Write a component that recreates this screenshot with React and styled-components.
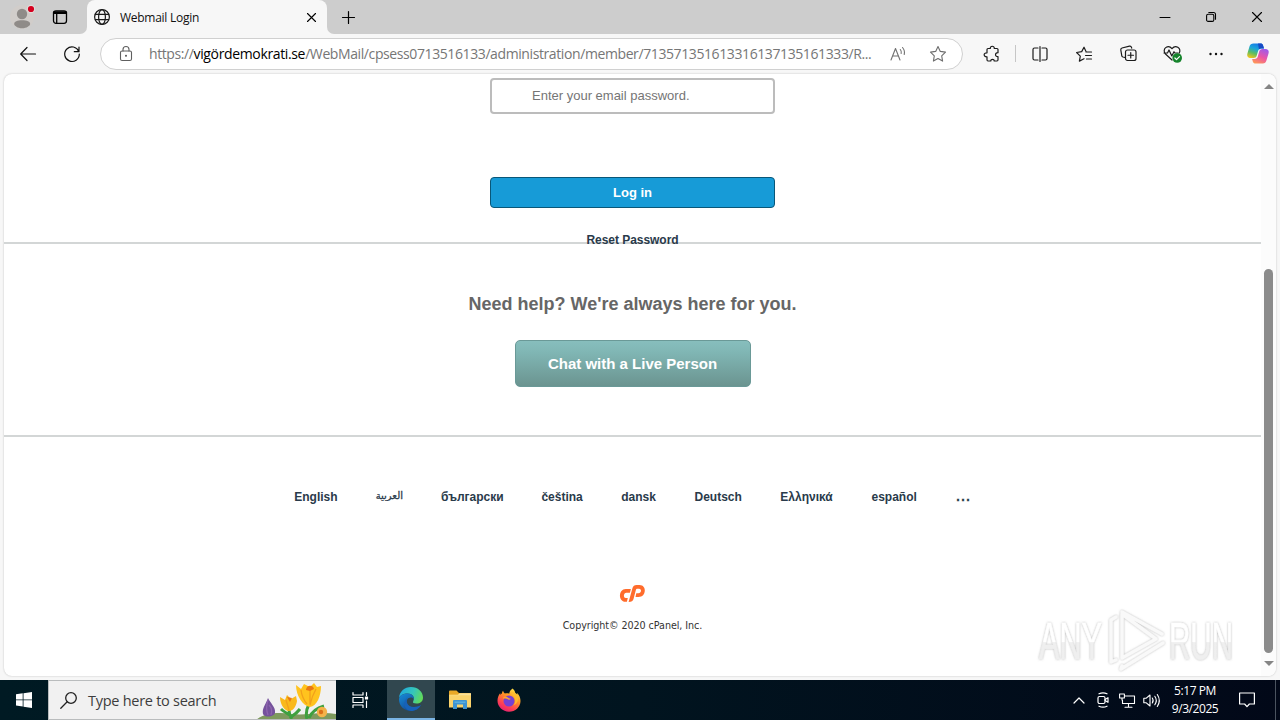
import React from "react";
import styled, { createGlobalStyle } from "styled-components";

const GlobalStyle = createGlobalStyle`
  * { box-sizing: border-box; }
  body { margin: 0; overflow: hidden; background: #f7f7f7; }
  svg { display: block; flex: none; overflow: visible; }
`;

const ui = `"Open Sans", "Noto Sans", sans-serif`;
const arial = `"Liberation Sans", "Noto Sans", sans-serif`;

const Screen = styled.div`
  width: 1280px; height: 720px; display: flex; flex-direction: column;
  overflow: hidden; background: #f7f7f7; font-family: ${ui}; color: #111;
`;
const TitleBar = styled.header`
  height: 34px; flex: none; display: flex; background: #cdcdcd;
`;
const Slot = styled.div`
  width: ${(p) => p.$w}px; height: 100%; flex: none;
  display: flex; align-items: center; justify-content: center;
`;
const Spacer = styled.div` flex: 1; `;
const ProfileArea = styled.div`
  width: 87px; display: flex; background: #cdcdcd; padding-left: 3px;
  border-bottom-right-radius: 7px;
`;
const TabBacking = styled.div` display: flex; background: #f7f7f7; `;
const Tab = styled.div`
  width: 240px; height: 34px; display: flex; align-items: center;
  background: #f7f7f7; padding-left: 7px; border-radius: 8px 8px 0 0;
`;
const TabCorner = styled.div` background: #cdcdcd; display: flex; `;
const TabTitle = styled.span`
  margin-left: 10px; width: 180px; font-size: 12px; letter-spacing: -0.27px; white-space: nowrap;
`;
const AfterTab = styled.div`
  flex: 1; display: flex; background: #cdcdcd; border-bottom-left-radius: 7px;
`;
const Toolbar = styled.nav`
  height: 39px; flex: none; display: flex; align-items: center; padding: 0 2px 0 6px;
`;
const AddressBar = styled.div`
  width: 863px; height: 32px; margin: 1px 7px 0 6px; display: flex; align-items: center;
  border: 1px solid #d0d0d0; border-radius: 16px; background: #fff; padding-left: 5px;
`;
const Url = styled.span`
  width: 728px; margin-left: 3px; font-size: 14px; line-height: 20px; color: #767676;
  letter-spacing: -0.4px; white-space: nowrap;
  b { font-weight: 400; color: #000; letter-spacing: -0.36px; }
`;
const Divider = styled.i` width: 1px; height: 17px; background: #c6c6c6; margin: 0 2px 0 1px; `;

const Viewport = styled.main`
  position: relative; height: 602px; margin: 1px 4px 0; flex: none; display: flex;
  background: #fff; border-radius: 8px; box-shadow: 0 0 2px #bbb; overflow: hidden;
`;
const Page = styled.div`
  width: 1257px; display: flex; flex-direction: column; align-items: center; font-family: ${arial};
`;
const Section = styled.section`
  width: 100%; height: ${(p) => p.$h}px; flex: none; display: flex; flex-direction: column;
  align-items: center; padding-top: ${(p) => p.$top}px;
  border-bottom: ${(p) => (p.$rule ? "2px solid #d3d6d6" : "0")};
`;
const PasswordField = styled.input`
  flex: none; width: 285px; height: 36px; padding: 0 0 1px 40px; border: 2px solid #bcbcbc; border-radius: 4px;
  background: #fff; outline: 0; font: 13px ${arial};
  &::placeholder { color: #757575; opacity: 1; }
`;
const LoginButton = styled.button`
  flex: none; width: 285px; height: 31px; margin-top: 63px; padding: 0; border: 1px solid #095779; border-radius: 4px;
  background: #179bd7; color: #fff; font: bold 13px ${arial};
`;
const ResetLink = styled.a`
  margin-top: 24px; height: 16px; flex: none; color: #293a4a; font: bold 12px/16px ${arial};
  letter-spacing: -0.04px;
`;
const HelpTitle = styled.h2`
  margin: 0; color: #666; font: bold 18px/22px ${arial};
`;
const ChatButton = styled.button`
  width: 236px; height: 47px; margin-top: 25px; padding: 0; border: 1px solid #6a9997; border-radius: 5px;
  background: linear-gradient(#87bebd, #80b6b4 25%, #6b9490); color: #fff; font: bold 15px ${arial};
`;
const LanguageList = styled.ul`
  height: 16px; margin: 0; padding: 0; list-style: none; display: flex; gap: 38.4px;
`;
const Language = styled.li`
  width: ${(p) => p.$w}px; display: flex; justify-content: center; white-space: nowrap;
  color: #293a4a; font: bold 12px/16px ${arial};
`;
const Arabic = styled(Language)` font: 10px/14px "DejaVu Sans", sans-serif; -webkit-text-stroke: 0.3px #293a4a; `;
const MoreLanguages = styled(Language)` font: 18px/13px ${arial}; -webkit-text-stroke: 0.3px #293a4a; `;
const LogoRow = styled.div` margin-top: 80px; height: 17px; `;
const Copyright = styled.p`
  margin: 17px 0 0; font: 9.6px/14px "DejaVu Sans", sans-serif; letter-spacing: -0.07px; color: #333; white-space: nowrap;
`;
const ScrollBar = styled.aside`
  width: 15px; display: flex; flex-direction: column; align-items: center; background: #fcfcfc; padding-top: 10px;
`;
const Arrow = styled.i`
  flex: none; border: 5px solid transparent; border-top-width: ${(p) => (p.$up ? 0 : 5)}px;
  border-bottom-width: ${(p) => (p.$up ? 5 : 0)}px;
  border-${(p) => (p.$up ? "bottom" : "top")}-color: #858585;
`;
const Thumb = styled.div`
  width: 9px; height: 384px; flex: none; margin: 180px 0 8px; border-radius: 5px; background: #8b8b8b;
`;
const Watermark = styled.div` position: absolute; left: 1030px; top: 530px; `;

const Taskbar = styled.footer`
  height: 40px; flex: none; margin-top: 4px; display: flex; color: #fff;
  background: linear-gradient(90deg, #001a23, #01141f 50%, #020818);
`;
const SearchBox = styled.div`
  width: 288px; height: 40px; display: flex; align-items: center; overflow: hidden;
  background: #f1f1f1; border: 1px solid #b9bcbd; border-right: 0; color: #3d3d3d;
`;
const SearchText = styled.span`
  width: 169px; font-size: 14.5px; letter-spacing: -0.27px; white-space: nowrap;
`;
const AppSlot = styled(Slot)`
  background: ${(p) => (p.$active ? "#31474f" : "transparent")};
  border-bottom: ${(p) => (p.$active ? "2px solid #7ab4e4" : "0")};
`;
const Clock = styled.div`
  width: 63px; display: flex; flex-direction: column; align-items: center; justify-content: center;
  font-size: 12px; line-height: 18px; letter-spacing: -0.43px; padding: 0 0 1px 1px; white-space: nowrap;
`;
const ShowDesktop = styled.i` width: 1px; height: 40px; margin: 0 4px 0 7px; background: #4b535f; `;

const Icon = ({ w = 20, h = w, s = 1.2, c = "#1b1b1b", children }) => (
  <svg width={w} height={h} viewBox={`0 0 ${w} ${h}`} fill="none" stroke={c} strokeWidth={s}
    strokeLinecap="round" strokeLinejoin="round">{children}</svg>
);

const Profile = () => (
  <Icon w={24}>
    <circle cx="12" cy="12" r="12" fill="#d1cdca" stroke="none" />
    <circle cx="12" cy="9" r="5.200" fill="#8f8b88" stroke="none" />
    <path d="M4.200 19c0-2.400 3-3.700 7.900-3.700s8 1.300 8 3.700c0 1.700-3.500 4.300-8 4.300S4.200 20.700 4.200 19Z" fill="#8f8b88" stroke="none" />
    <circle cx="21" cy="4" r="4.200" fill="#e0dcd9" stroke="none" />
    <circle cx="21" cy="4" r="3.100" fill="#d5001f" stroke="none" />
  </Icon>
);
const Workspaces = () => (
  <Icon w={16} s={1.300} c="#000">
    <rect x="1.500" y="1.800" width="13" height="12.500" rx="2.500" />
    <path d="M2.200 3.600h11.600" strokeWidth="2.600" /><path d="M4.700 4.500v9.500" />
  </Icon>
);
const Globe = () => (
  <Icon w={16}>
    <circle cx="8" cy="8" r="7.400" /><ellipse cx="8" cy="8" rx="3.400" ry="7.400" />
    <path d="M1.400 5.300h13.200M1.400 10.700h13.200" />
  </Icon>
);
const Cross = ({ w = 10 }) => <Icon w={w} c="#000" s={1.100}><path d={`M.5.5l${w - 1} ${w - 1}M${w - 0.5}.5l-${w - 1} ${w - 1}`} /></Icon>;
const Star = () => (
  <Icon w={18} c="#6e6e6e" s={1.100}>
    <path d="m9 1.500 2.300 4.900 5.200.7-3.800 3.700.9 5.300L9 13.500l-4.600 2.600.9-5.300L1.500 7.100l5.200-.7Z" />
  </Icon>
);
const Puzzle = () => (
  <Icon w={18} s={1.200}>
    <path d="M5 3.500h2.300c-.5-3 4.400-3 4 0H14c.6 0 1 .4 1 1v3.200c-3.300-.2-3.300 4.200 0 4v3.100c0 .7-.4 1.200-1 1.200h-2.800c.1-2.300-3.500-2.300-3.400 0H5c-.7 0-1-.5-1-1.200v-3c-3.800.2-3.800-4.200 0-4V4.500c0-.6.4-1 1-1Z" />
  </Icon>
);
const Edge = () => (
  <svg width="26" height="26" viewBox="0 0 26 26">
    <defs>
      <linearGradient id="edgeTop" x1="0" y1=".3" x2="1" y2=".6"><stop stopColor="#1fa8df" /><stop offset=".55" stopColor="#35c6ba" /><stop offset="1" stopColor="#63db56" /></linearGradient>
      <linearGradient id="edgeLow" x1="0" y1="0" x2=".8" y2="1"><stop stopColor="#168cd9" /><stop offset="1" stopColor="#123f8c" /></linearGradient>
    </defs>
    <path d="M1 12C1.500 5.500 6.600 1 13 1c7 0 12 5 12 10.500 0 4-3 6-6.500 6-3 0-4-1-3.300-2.300C17.500 11 14 7.500 9.500 7.500 5.500 7.500 2 9.500 1 12Z" fill="url(#edgeTop)" />
    <path d="M1 13.500C1 9.500 5 7.400 9.500 7.400c4 0 7 2.700 6.300 6-.5-1.400-1.700-2-3-2-3 0-5.100 3-3.700 6.300C11 22 17.500 22.500 23 19c-2 3.700-5.700 6-10 6C6.300 25 1 20 1 13.500Z" fill="url(#edgeLow)" />
    <path d="M9.300 11.900c-2.600 1.900-3.800 5.600-2.500 8.600 1.200 2.700 3.500 4.300 6.200 4.500 4.300 0 8-2.300 10-6-5.600 3.300-12.500 2.400-14-2-.6-1.900-.4-3.500.3-5.100Z" fill="#1761b8" />
  </svg>
);
const Folder = () => (
  <svg width="22" height="20" viewBox="0 0 22 20">
    <path d="M0 1.500Q0 .5 1 .5h6.500L10 3h11q1 0 1 1v4H0Z" fill="#e9a827" />
    <path d="M0 5h22v12.500H0Z" fill="#fbd36b" /><path d="M0 4.800h9l1.500-1.500H22v2H0Z" fill="#fbe198" />
    <path d="M4 19v-8q0-1 1-1h12q1 0 1 1v8h-4v-4.500H8V19Z" fill="#3f94d1" />
    <path d="M5.500 12.200h11" stroke="#62b5e2" strokeWidth="1.200" />
  </svg>
);
const Firefox = () => (
  <svg width="24" height="24" viewBox="0 0 24 24">
    <defs><linearGradient id="fox" x1=".85" y1="0" x2=".3" y2="1"><stop stopColor="#fff04b" /><stop offset=".4" stopColor="#ff9824" /><stop offset=".75" stopColor="#ff4053" /><stop offset="1" stopColor="#e42072" /></linearGradient></defs>
    <path d="M15.500.5c1.600 1.200 2.500 2.800 2.800 4.500 1 .4 1.500 1 2 1.700 0-.8-.1-1.400-.4-2 2.300 2 3.600 5.200 3.600 8.300 0 6-5.200 10.800-11.500 10.800S.5 18.600.5 12.800c0-2.800.9-5.500 2.800-7.800v2c.5-.7 1-1.200 1.600-1.500.1-1 .4-1.900 1.100-2.700.3 1.200.9 2 1.800 2.600 2-.2 3.200-.3 4.400.3C12.500 3.500 13.500 2 15.500.5Z" fill="url(#fox)" />
    <circle cx="12" cy="13" r="5.500" fill="#7640d3" />
    <path d="M6.300 11c1.500-.9 3.600-.4 5 .5 1 .6 2 0 2.500-.8-1.300.2-2-.5-3-1.300-1.200-1-3-1.200-4.400-.3Z" fill="#ffa52c" />
    <path d="M14.500 3.500c-.6 3 3.300 4.800 3.700 8.700.2 2.300-.7 4.100-2.200 5.300 4.500-1.300 6.200-5.800 4.300-10-1-2-3-3-5.800-4Z" fill="#ffbd2d" opacity=".9" />
  </svg>
);
const Copilot = () => (
  <svg width="22" height="21" viewBox="0 0 22 21">
    <defs>
      <linearGradient id="cpBlue" x1=".6" y1="0" x2=".2" y2="1"><stop stopColor="#1679e8" /><stop offset=".35" stopColor="#1ca6d9" /><stop offset=".65" stopColor="#5bbd63" /><stop offset="1" stopColor="#f6c51a" /></linearGradient>
      <linearGradient id="cpPink" x1=".7" y1="0" x2=".2" y2="1"><stop stopColor="#a15ae8" /><stop offset=".5" stopColor="#ec55a5" /><stop offset="1" stopColor="#ff9a54" /></linearGradient>
    </defs>
    <path d="M15.500 6h2.300c3.400 0 4.500 2 3.700 4.500l-2 6.800c-.7 2.200-1.700 3.200-3.700 3.200H8.500c-1.300 0-2.200-.6-2.700-2l-.7-2.500h2.500c1.800 0 2.800-1 3.300-2.700l1.300-4.800c.4-1.500 1.500-2.500 3.300-2.500Z" fill="url(#cpPink)" />
    <path d="M6.500 15H4C.8 15-.3 13 .4 10.500l2-6.800C3.100 1.500 4.300.5 6.500.5h7c1.300 0 2.200.6 2.600 2L17 5.500h-2.800c-1.700 0-2.600.9-3.100 2.500l-1.400 4.800C9.200 14.300 8.300 15 6.500 15Z" fill="url(#cpBlue)" />
    <path d="m11 .5h2.500c1.300 0 2.200.6 2.600 2L17 5.500h-2.800c-1 0-1.700.3-2.200.9Z" fill="#174bc5" />
  </svg>
);
const CpanelLogo = () => (
  <svg width="25" height="17" viewBox="0 0 25 17" fill="#ff6c2c">
    <path d="M5.800 4h5.100l-1 3.800H6.300C3.500 7.800 3 13 5.800 13h2l-.9 3.800H5.500C-2 16.800-1.800 4 5.800 4Z" />
    <path d="M8.600 17 12.500 3c.6-2 1.900-3 4-3h3c7.500 0 7 12-1 12h-3l.8-3.700h2.200c3 0 3.500-4.500.5-4.500h-2c-.6 0-.8.200-1 .8L13.500 14c-.5 2-2 3-4.900 3Z" />
  </svg>
);
const Flowers = () => (
  <svg width="80" height="40" viewBox="0 0 80 40">
    <path d="M0 40c8-7 22-8 36-6s27-3 44 0v6Z" fill="#7e9a5d" />
    <path d="M7 34c-1-6 2-8 5-16 2 5 8 9 7 15-1 4-10 5-12 1Z" fill="#75529c" />
    <path d="M12 20c-2 6-2 10 0 15M13 25c3 3 3 7 2 10" stroke="#8d65ae" strokeWidth="1.300" fill="none" />
    <path d="M33 28q0 8 3 11M53 24q-4 8-2 15M53 38q4-9 15-12M35 36q-8-5-10-7M35 37q6-4 9-8" stroke="#3fa03f" strokeWidth="3" fill="none" />
    <path d="M24 17l5 3 2-5 4 4 5-3 1 5c-1 6-4 10-8 10s-9-6-9-14Z" fill="#f9b91a" />
    <path d="M40 5l5 4 3-5 6 3 4-4 3 4 4-1c0 10-4 20-11 21-7-1-14-11-14-22Z" fill="#ffc31e" />
    <path d="M45 10q1 8 6 14M60 9q-4 7-6 16M54 8v16M30 20l3 10" stroke="#f2a01b" strokeWidth="1.300" fill="none" />
    <path d="M50 10c0-5 7-6 8-1l-4 2ZM31 17l5 1-2 4Z" fill="#e97812" />
    <circle cx="66" cy="32" r="5.200" fill="#f4b34a" /><circle cx="65" cy="32" r="2.200" fill="#dc7118" />
  </svg>
);

const languages = [
  ["English", 43], ["العربية", 27], ["български", 62], ["čeština", 41],
  ["dansk", 35], ["Deutsch", 47.5], ["Ελληνικά", 52.5], ["español", 46],
];

export default function App() {
  return (
    <Screen>
      <GlobalStyle />
      <TitleBar>
        <TabBacking><ProfileArea>
          <Slot $w={38}><Profile /></Slot>
          <Slot $w={38}><Workspaces /></Slot>
        </ProfileArea></TabBacking>
        <TabCorner><Tab><Globe /><TabTitle>Webmail Login</TabTitle><Slot $w={22}><Cross w={9} /></Slot></Tab></TabCorner>
        <TabBacking><AfterTab><Slot $w={43}>
          <Icon w={13} s={1.200} c="#000"><path d="M6.500.5v12M.5 6.500h12" /></Icon>
        </Slot></AfterTab></TabBacking>
        <Spacer />
        <Slot $w={46}><Icon w={10} s={1} c="#000"><path d="M0 5.500h10" /></Icon></Slot>
        <Slot $w={46}><Icon w={10} s={1.100} c="#000"><rect x=".6" y="2.200" width="7.200" height="7.200" rx="1.500" /><path d="M2.800.5h4.700q2 0 2 2v4.700" /></Icon></Slot>
        <Slot $w={46}><Cross /></Slot>
      </TitleBar>

      <Toolbar>
        <Slot $w={44}><Icon w={16} c="#111"><path d="M15.500 8H.7M7 1.500.7 8 7 14.500" /></Icon></Slot>
        <Slot $w={44}><Icon w={16} c="#111"><path d="M14.800 5.500A7.300 7.300 0 1 0 15.300 8M15 1v4.700h-4.700" /></Icon></Slot>
        <AddressBar>
          <Slot $w={40}><Icon w={14} h={16} c="#5f5f5f" s={1.100}>
            <rect x="1.500" y="5" width="11" height="9.500" rx="1.600" /><path d="M4 5V3.500a3 3 0 0 1 6 0V5" /><circle cx="7" cy="9.700" r=".5" fill="#555" />
          </Icon></Slot>
          <Url>https://<b>vigördemokrati.se</b>/WebMail/cpsess0713516133/administration/member/713571351613316137135161333/R...</Url>
          <Slot $w={42}><Icon w={16} c="#707070" s={1.100}>
            <path d="M1 14 5.500 2.500 10 14M2.700 10h5.600M10.300 3.500q1.400 1.600.9 4M12.500 1.500q2.700 3 1.700 7" />
          </Icon></Slot>
          <Slot $w={38}><Star /></Slot>
        </AddressBar>
        <Slot $w={44}><Puzzle /></Slot>
        <Divider />
        <Slot $w={44}><Icon w={16}><path d="M6 2H2.500Q1 2 1 3.500v9Q1 14 2.500 14H6M10 2h3.500Q15 2 15 3.500v9q0 1.500-1.500 1.500H10M8 .5v15" /></Icon></Slot>
        <Slot $w={44}><Icon w={16}><path d="M10 5.600 8 1.200 5.700 5.600.6 6.500l3.700 3.600-.9 5L8 12.700M10 6h5.500M9.500 9.500h6M10.500 13h5" /></Icon></Slot>
        <Slot $w={44}><Icon w={17}>
          <rect x="5.500" y="5" width="10.500" height="10.500" rx="2" /><path d="M10.750 7.500V13M8 10.250h5.500M5 12.500 3 12q-1-.3-1.200-1.200L.8 5q-.3-1.600 1.200-2l7.500-1.800q1.500-.3 2 1.200l.2.800" />
        </Icon></Slot>
        <Slot $w={44}><Icon w={19} h={18}>
          <path d="M9 15 2.500 9C.5 7 .8 3.500 3.200 2.200 5.300 1 7.500 1.800 9 3.700c1.500-1.900 3.700-2.700 5.800-1.500 2.200 1.300 2.700 4 1.300 6M1 8h3.500L6 5l2.800 6L11 6.700l.8 1.300h3" />
          <circle cx="14.200" cy="13" r="4.800" fill="#16842c" stroke="none" /><path d="m11.900 13 1.600 1.600 3-3" stroke="#fff" />
        </Icon></Slot>
        <Slot $w={44}><Icon w={14} h={4}><g fill="#111" stroke="none"><circle cx="1.500" cy="2" r="1.200" /><circle cx="7" cy="2" r="1.200" /><circle cx="12.500" cy="2" r="1.200" /></g></Icon></Slot>
        <Slot $w={40}><Copilot /></Slot>
      </Toolbar>

      <Viewport>
        <Page>
          <Section $h={170} $top={4} $rule>
            <PasswordField type="password" placeholder="Enter your email password." />
            <LoginButton>Log in</LoginButton>
            <ResetLink>Reset Password</ResetLink>
          </Section>
          <Section $h={193} $top={49} $rule>
            <HelpTitle>Need help? We're always here for you.</HelpTitle>
            <ChatButton>Chat with a Live Person</ChatButton>
          </Section>
          <Section $h={238} $top={52}>
            <LanguageList>
              {languages.map(([name, w]) => name === "العربية"
                ? <Arabic key={name} $w={w} lang="ar">{name}</Arabic>
                : <Language key={name} $w={w}>{name}</Language>)}
              <MoreLanguages $w={15}>...</MoreLanguages>
            </LanguageList>
            <LogoRow><CpanelLogo /></LogoRow>
            <Copyright>Copyright© 2020 cPanel, Inc.</Copyright>
          </Section>
        </Page>
        <ScrollBar><Arrow $up /><Thumb /><Arrow /></ScrollBar>
        <Watermark>
          <svg width="204" height="72" viewBox="0 0 204 72">
            <defs>
              <linearGradient id="mark" x1="0" y1="0" x2="0" y2="1"><stop offset=".5" stopColor="#fff" /><stop offset=".52" stopColor="#efefef" /></linearGradient>
              <filter id="halo" x="-10%" y="-10%" width="120%" height="120%"><feDropShadow dx="0" dy="0" stdDeviation="1.300" floodColor="#777" floodOpacity=".55" /></filter>
            </defs>
            <g filter="url(#halo)">
              <g fill="url(#mark)" stroke="url(#mark)" strokeWidth=".6" fontFamily="Liberation Sans" fontSize="51">
                <text x="5" y="55" textLength="63" lengthAdjust="spacingAndGlyphs">ANY</text>
                <text x="135" y="55" textLength="64" lengthAdjust="spacingAndGlyphs">RUN</text>
              </g>
              <path d="M88 10v44l34-19ZM82 13l-5 3v42l5-2M88 62l-1 3 42-26M88 8l40 22" fill="none" stroke="#f9f9f9" strokeWidth="3.500" strokeLinejoin="round" strokeLinecap="round" />
            </g>
          </svg>
        </Watermark>
      </Viewport>

      <Taskbar>
        <Slot $w={48}><svg width="16" height="16" viewBox="0 0 16 16"><path d="M0 2.300 6.700 1.300v6.200H0ZM7.500 1.200 16 0v7.500H7.500ZM0 8.300h6.700v6.300L0 13.600ZM7.500 8.300H16V16l-8.500-1.200Z" fill="#fff" /></svg></Slot>
        <SearchBox>
          <Slot $w={39}><Icon w={17} s={1.300} c="#222"><circle cx="11" cy="6" r="5.300" /><path d="M7.200 9.800.8 16.200" /></Icon></Slot>
          <SearchText>Type here to search</SearchText>
          <Flowers />
        </SearchBox>
        <Slot $w={48}><Icon w={16} s={1.200} c="#fff"><path d="M1 .5V3h10V.5M1 15.500V13h10v2.500M1 5.500h10v5H1ZM14.500.5v3M14.500 9v6.500" /><rect x="13.500" y="5" width="2" height="2" fill="#fff" /></Icon></Slot>
        <Slot $w={3} />
        <AppSlot $w={48} $active><Edge /></AppSlot>
        <Slot $w={50}><Folder /></Slot>
        <Slot $w={48}><Firefox /></Slot>
        <Spacer />
        <Slot $w={24}><Icon w={12} h={8} c="#fff"><path d="m1 7 5-5 5 5" /></Icon></Slot>
        <Slot $w={24}><Icon w={14} h={16} c="#fff"><rect x="2" y="4.500" width="7" height="7" rx="1.500" /><path d="m9 7.500 3-1.800v4.600L9 8.500M3 1.800q4-2 8 0M3 14.200q4 2 8 0" /></Icon></Slot>
        <Slot $w={24}><Icon w={16} h={15} c="#fff" s={1.100}><path d="M6 3h9.500v7.500H3.500V7M9.500 10.500v3.500M6 14.300h7M.6 1h4.800v4H.6ZM3 5v2" /></Icon></Slot>
        <Slot $w={24}><Icon w={17} h={15} c="#fff" s={1.100}><path d="M.8 5.200h2.500L7 2v11L3.300 9.800H.8ZM9.300 5q1.700 2.500 0 5M11.800 3.300q3 4.200 0 8.400M14.300 1.500q4 6 0 12" /></Icon></Slot>
        <Clock><span>5:17 PM</span><span>9/3/2025</span></Clock>
        <Slot $w={42}><Icon w={16} h={16} c="#fff" s={1.200}><path d="M.6 1h14.800v11h-5L8 14.700 5.600 12h-5Z" /></Icon></Slot>
        <ShowDesktop />
      </Taskbar>
    </Screen>
  );
}
